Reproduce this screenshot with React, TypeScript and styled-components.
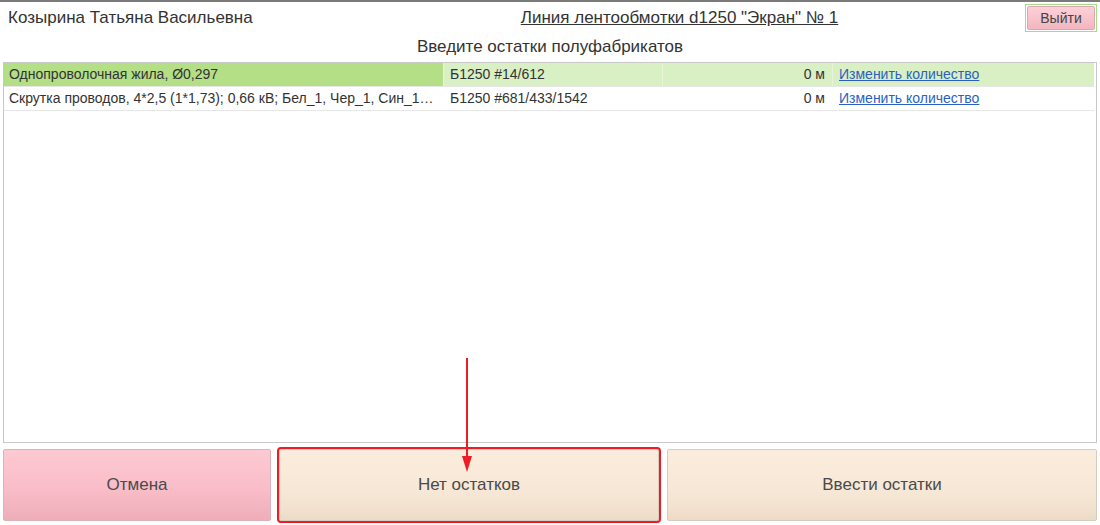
import React from 'react';
import styled, { createGlobalStyle } from 'styled-components';

type Row = {
  name: string;
  batch: string;
  amount: string;
};

const rows: Row[] = [
  { name: 'Однопроволочная жила, Ø0,297', batch: 'Б1250 #14/612', amount: '0 м' },
  {
    name: 'Скрутка проводов, 4*2,5 (1*1,73); 0,66 кВ; Бел_1, Чер_1, Син_1, Кор_1',
    batch: 'Б1250 #681/433/1542',
    amount: '0 м',
  },
];

const App: React.FC = () => {
  return (
    <Page>
      <GlobalStyle />
      <Header>
        <UserName>Козырина Татьяна Васильевна</UserName>
        <LineTitle>Линия лентообмотки d1250 "Экран" № 1</LineTitle>
        <ExitWrap>
          <ExitButton>Выйти</ExitButton>
        </ExitWrap>
      </Header>
      <Subtitle>Введите остатки полуфабрикатов</Subtitle>
      <Grid>
        {rows.map((row, i) => (
          <GridRow key={row.batch}>
            <Cell $selected={i === 0} $current={i === 0}>{row.name}</Cell>
            <Cell $selected={i === 0}>{row.batch}</Cell>
            <Cell $selected={i === 0} $align="right">{row.amount}</Cell>
            <Cell $selected={i === 0}>
              <ChangeLink href="#">Изменить количество</ChangeLink>
            </Cell>
          </GridRow>
        ))}
      </Grid>
      <Footer>
        <ActionButton $tone="pink">Отмена</ActionButton>
        <ActionButton $tone="beige" $marked>Нет остатков</ActionButton>
        <ActionButton $tone="beige">Ввести остатки</ActionButton>
      </Footer>
      <Arrow width="14" height="116" viewBox="0 0 14 116">
        <line x1="7" y1="0" x2="7" y2="100" stroke="#ee1c24" strokeWidth="2" />
        <polygon points="2,98 12,98 7,114" fill="#ee1c24" />
      </Arrow>
    </Page>
  );
};

const GlobalStyle = createGlobalStyle`
  html, body {
    margin: 0;
    padding: 0;
    background: #fff;
  }
  body {
    font-family: "Liberation Sans", Arial, sans-serif;
    color: #333;
  }
`;

const Page = styled.div`
  position: relative;
  width: 1100px;
  height: 525px;
  box-sizing: border-box;
  border-top: 2px solid #7b7b7b;
  display: flex;
  flex-direction: column;
  padding: 0 3px 4px 3px;
`;

const Header = styled.div`
  display: flex;
  align-items: center;
  height: 31px;
`;

const UserName = styled.div`
  font-size: 17px;
  color: #333;
  padding-left: 5px;
  width: 250px;
  white-space: nowrap;
`;

const LineTitle = styled.div`
  flex: 1;
  text-align: center;
  font-size: 17px;
  color: #333;
  text-decoration: underline;
  padding-left: 76px;
`;

const ExitWrap = styled.div`
  border: 1px solid #a8da8c;
  padding: 1px;
  margin-top: 1px;
`;

const ExitButton = styled.button`
  width: 68px;
  height: 24px;
  border: 1px solid #d9a9b1;
  border-radius: 2px;
  background: linear-gradient(#fdd0d8, #f2b6c0);
  font-family: inherit;
  font-size: 14px;
  color: #444;
  padding: 0;
  cursor: pointer;
`;

const Subtitle = styled.div`
  text-align: center;
  font-size: 17px;
  color: #333;
  height: 29px;
  line-height: 28px;
`;

const Grid = styled.div`
  flex: 1;
  border: 1px solid #c9c9c9;
  background: #fff;
  display: flex;
  flex-direction: column;
`;

const GridRow = styled.div`
  display: grid;
  grid-template-columns: 439px 219px 170px 1fr;
  height: 23px;
  border-bottom: 1px solid #e6e6e6;
  margin-right: 2px;
`;

const Cell = styled.div<{ $selected?: boolean; $current?: boolean; $align?: string }>`
  font-size: 14px;
  line-height: 23px;
  color: #333;
  padding: 0 7px 0 6px;
  white-space: nowrap;
  overflow: hidden;
  text-overflow: ellipsis;
  text-align: ${(p) => p.$align || 'left'};
  background: ${(p) => (p.$current ? '#b4df87' : p.$selected ? '#d9efc4' : 'transparent')};
  border-left: 1px solid ${(p) => (p.$selected ? '#e6f4d8' : 'transparent')};
  &:first-child {
    border-left: none;
    padding-left: 5px;
  }
`;

const ChangeLink = styled.a`
  color: #2c5fc2;
  text-decoration: underline;
`;

const Footer = styled.div`
  display: grid;
  grid-template-columns: 268px 380px 1fr;
  gap: 8px;
  height: 72px;
  margin-top: 6px;
`;

const ActionButton = styled.button<{ $tone: 'pink' | 'beige'; $marked?: boolean }>`
  height: 72px;
  border: 1px solid #cfc7bd;
  border-radius: 2px;
  font-family: inherit;
  font-size: 17px;
  color: #4a4a4a;
  cursor: pointer;
  background: ${(p) =>
    p.$tone === 'pink'
      ? 'linear-gradient(#fdc9d3, #f8bcc7 60%, #edaeb8)'
      : 'linear-gradient(#fbeddd, #f7e7d6 60%, #ecdcc7)'};
  border-color: ${(p) => (p.$tone === 'pink' ? '#dcb3ba' : '#d6ccc0')};
  outline: ${(p) => (p.$marked ? '2px solid #ee1c24' : 'none')};
  outline-offset: 0;
`;

const Arrow = styled.svg`
  position: absolute;
  left: 460px;
  top: 356px;
`;

export default App;
